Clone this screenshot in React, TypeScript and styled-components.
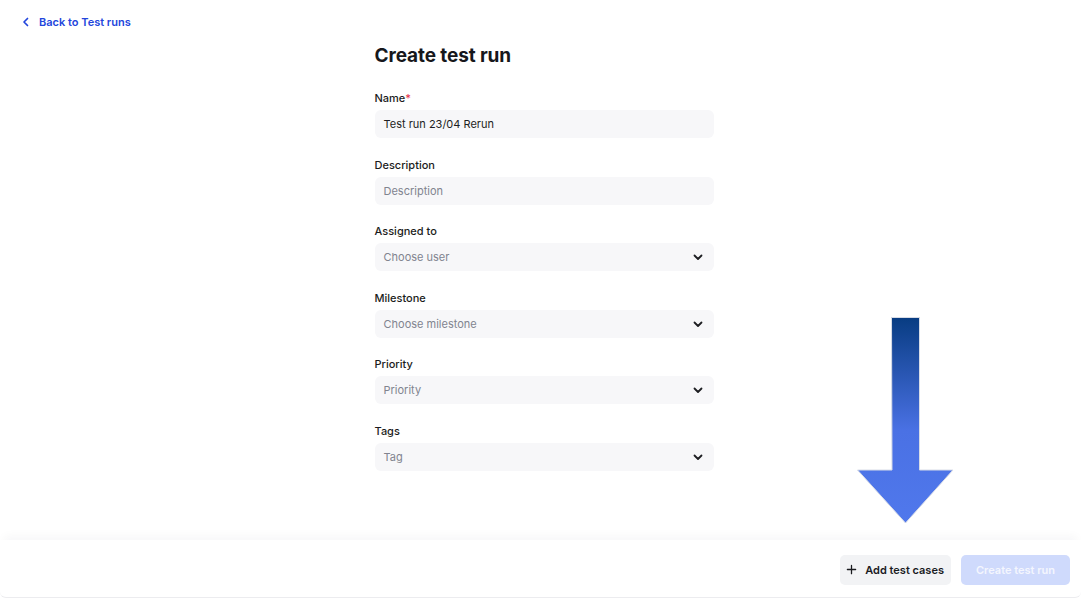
import React from 'react'
import styled, { createGlobalStyle } from 'styled-components'

const GlobalStyle = createGlobalStyle`
  html, body {
    margin: 0;
    padding: 0;
    background: #ffffff;
    font-family: Inter, "Noto Sans", Arial, sans-serif;
    color: #17181c;
  }
  * { box-sizing: border-box; }
`

const Page = styled.div`
  position: relative;
  display: flex;
  flex-direction: column;
  height: 599px;
  overflow: hidden;
`

const TopBar = styled.div`
  display: flex;
  align-items: flex-start;
  padding: 15px 0 0 22px;
  height: 38px;
`

const BackLink = styled.a`
  display: flex;
  align-items: center;
  gap: 9px;
  font-size: 11px;
  line-height: 14px;
  font-weight: 600;
  color: #2346dc;
  text-decoration: none;
  cursor: pointer;
`

const Main = styled.div`
  flex: 1;
  display: flex;
  justify-content: center;
  padding-left: 7px;
`

const Form = styled.div`
  width: 339px;
  display: flex;
  flex-direction: column;
`

const Title = styled.h1`
  margin: 6px 0 23px;
  font-size: 19px;
  font-weight: 700;
  letter-spacing: -0.1px;
  color: #16171b;
`

const Field = styled.div`
  display: flex;
  flex-direction: column;
  gap: 4px;
  margin-bottom: 18.5px;
`

const Label = styled.label`
  font-size: 11px;
  font-weight: 500;
  line-height: 16px;
  color: #1b1c20;

  span {
    color: #e5334b;
  }
`

const Control = styled.div<{ $filled?: boolean }>`
  display: flex;
  align-items: center;
  justify-content: space-between;
  height: 28px;
  padding: 0 10px 0 9px;
  border-radius: 6px;
  background: #f7f7f9;
  font-size: 11px;
  color: ${(p) => (p.$filled ? '#1d1e22' : '#81848f')};
`

const Chevron = () => (
  <svg width="12" height="12" viewBox="0 0 12 12" fill="none">
    <path d="M2.5 4.5 L6 8 L9.5 4.5" stroke="#1d1e22" strokeWidth="1.8" strokeLinecap="round" strokeLinejoin="round" />
  </svg>
)

const Footer = styled.div`
  display: flex;
  justify-content: flex-end;
  align-items: center;
  gap: 10px;
  height: 58px;
  margin-bottom: 1px;
  padding: 2px 11px 0 0;
  background: #ffffff;
  border-bottom: 1px solid #ececef;
  border-radius: 0 0 6px 6px;
  box-shadow: 0 -8px 10px -4px rgba(30, 35, 60, 0.035);
`

const Button = styled.button<{ $primary?: boolean }>`
  display: flex;
  align-items: center;
  gap: 8px;
  height: 30px;
  padding: 0 ${(p) => (p.$primary ? '15px' : '7px')} 0 ${(p) => (p.$primary ? '15px' : '6px')};
  border: none;
  border-radius: 5px;
  font-family: inherit;
  font-size: 11px;
  font-weight: 600;
  background: ${(p) => (p.$primary ? '#cfdafc' : '#f2f3f5')};
  color: ${(p) => (p.$primary ? '#f4f6fe' : '#1a1b1f')};
`

const Arrow = styled.svg`
  position: absolute;
  left: 855px;
  top: 316px;
`

const fields = [
  { label: 'Name', required: true, value: 'Test run 23/04 Rerun', filled: true, select: false },
  { label: 'Description', value: 'Description', select: false },
  { label: 'Assigned to', value: 'Choose user', select: true },
  { label: 'Milestone', value: 'Choose milestone', select: true },
  { label: 'Priority', value: 'Priority', select: true },
  { label: 'Tags', value: 'Tag', select: true },
]

export default function App() {
  return (
    <Page>
      <GlobalStyle />
      <TopBar>
        <BackLink>
          <svg width="8" height="10" viewBox="0 0 8 10" fill="none">
            <path d="M5.5 1.5 L2 5 L5.5 8.5" stroke="#2346dc" strokeWidth="1.7" strokeLinecap="round" strokeLinejoin="round" />
          </svg>
          Back to Test runs
        </BackLink>
      </TopBar>
      <Main>
        <Form>
          <Title>Create test run</Title>
          {fields.map((f) => (
            <Field key={f.label}>
              <Label>
                {f.label}
                {f.required && <span>*</span>}
              </Label>
              <Control $filled={f.filled}>
                {f.value}
                {f.select && <Chevron />}
              </Control>
            </Field>
          ))}
        </Form>
      </Main>
      <Footer>
        <Button>
          <svg width="11" height="11" viewBox="0 0 12 12" fill="none">
            <path d="M6 1.5 V10.5 M1.5 6 H10.5" stroke="#1a1b1f" strokeWidth="1.4" strokeLinecap="round" />
          </svg>
          Add test cases
        </Button>
        <Button $primary>Create test run</Button>
      </Footer>
      <Arrow width="101" height="210" viewBox="0 0 101 210">
        <defs>
          <linearGradient id="arrowFill" x1="0" y1="0" x2="0" y2="1">
            <stop offset="0" stopColor="#083c82" />
            <stop offset="0.55" stopColor="#4a71e4" />
            <stop offset="1" stopColor="#5078ec" />
          </linearGradient>
        </defs>
        <path
          d="M36.5 1.5 H64.5 V154 H98 L50.5 207 L2.5 154 H37 Z"
          fill="url(#arrowFill)"
          stroke="#d8dce6"
          strokeWidth="1"
        />
      </Arrow>
    </Page>
  )
}
